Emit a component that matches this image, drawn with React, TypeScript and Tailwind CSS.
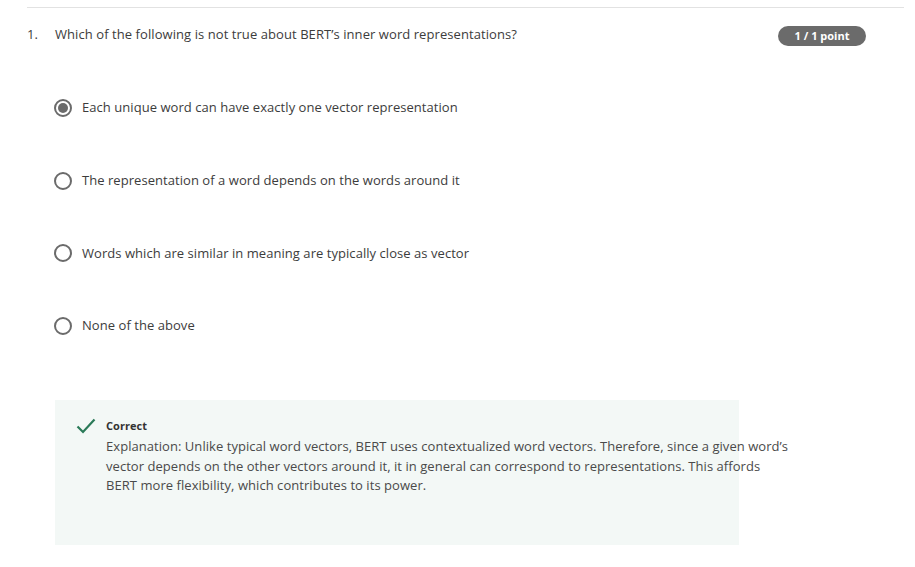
import React from "react";

const options = [
  { label: "Each unique word can have exactly one vector representation", selected: true },
  { label: "The representation of a word depends on the words around it", selected: false },
  { label: "Words which are similar in meaning are typically close as vector", selected: false },
  { label: "None of the above", selected: false },
];

const Radio = ({ selected }: { selected: boolean }) => (
  <span className="w-[18px] h-[18px] rounded-full border-2 border-[#6b6b6b] flex items-center justify-center flex-shrink-0">
    {selected && <span className="w-[10px] h-[10px] rounded-full bg-[#6b6b6b]" />}
  </span>
);

export default function App() {
  return (
    <div
      className="bg-white w-[915px] h-[567px] overflow-hidden text-[#3c3c3c]"
      style={{ fontFamily: '"Open Sans", "Liberation Sans", sans-serif' }}
    >
      <div className="ml-[27px] mr-[11px] mt-[7px] border-t border-[#e2e2e2] pr-[38px]">
        {/* Question */}
        <div className="flex items-start justify-between pt-[17px]">
          <div className="flex text-[13px] leading-[18px] tracking-[0.07px]">
            <span className="w-[28px]">1.</span>
            <span>Which of the following is not true about BERT’s inner word representations?</span>
          </div>
          <span className="mt-[1px] bg-[#6b6b6b] text-white text-[11px] font-bold leading-[20px] h-[20px] w-[88px] rounded-full text-center">
            1 / 1 point
          </span>
        </div>

        {/* Options */}
        <div className="flex flex-col gap-[54.7px] mt-[53px] ml-[27px]">
          {options.map((o) => (
            <label key={o.label} className="flex items-center gap-[10px] h-[18px] text-[13px] tracking-[0.05px]">
              <Radio selected={o.selected} />
              <span>{o.label}</span>
            </label>
          ))}
        </div>

        {/* Feedback */}
        <div className="mt-[65px] ml-[28px] w-[684px] h-[145px] bg-[#f3f8f6] pl-[21px] pt-[17px] flex gap-[10px]">
          <svg width="20" height="18" viewBox="0 0 20 18" className="flex-shrink-0">
            <path d="M1.5 9.5 L7 15 L18.5 2.5" fill="none" stroke="#2a7a58" strokeWidth="2.2" />
          </svg>
          <div className="text-[13px] whitespace-nowrap tracking-[0.05px]">
            <div className="font-bold text-[11px] leading-[18px] text-[#333]">Correct</div>
            <p className="leading-[19.5px] mt-[2px] text-[#4a4a4a]">
              Explanation: Unlike typical word vectors, BERT uses contextualized word vectors. Therefore, since a given word’s
              <br />
              vector depends on the other vectors around it, it in general can correspond to representations. This affords
              <br />
              BERT more flexibility, which contributes to its power.
            </p>
          </div>
        </div>
      </div>
    </div>
  );
}
